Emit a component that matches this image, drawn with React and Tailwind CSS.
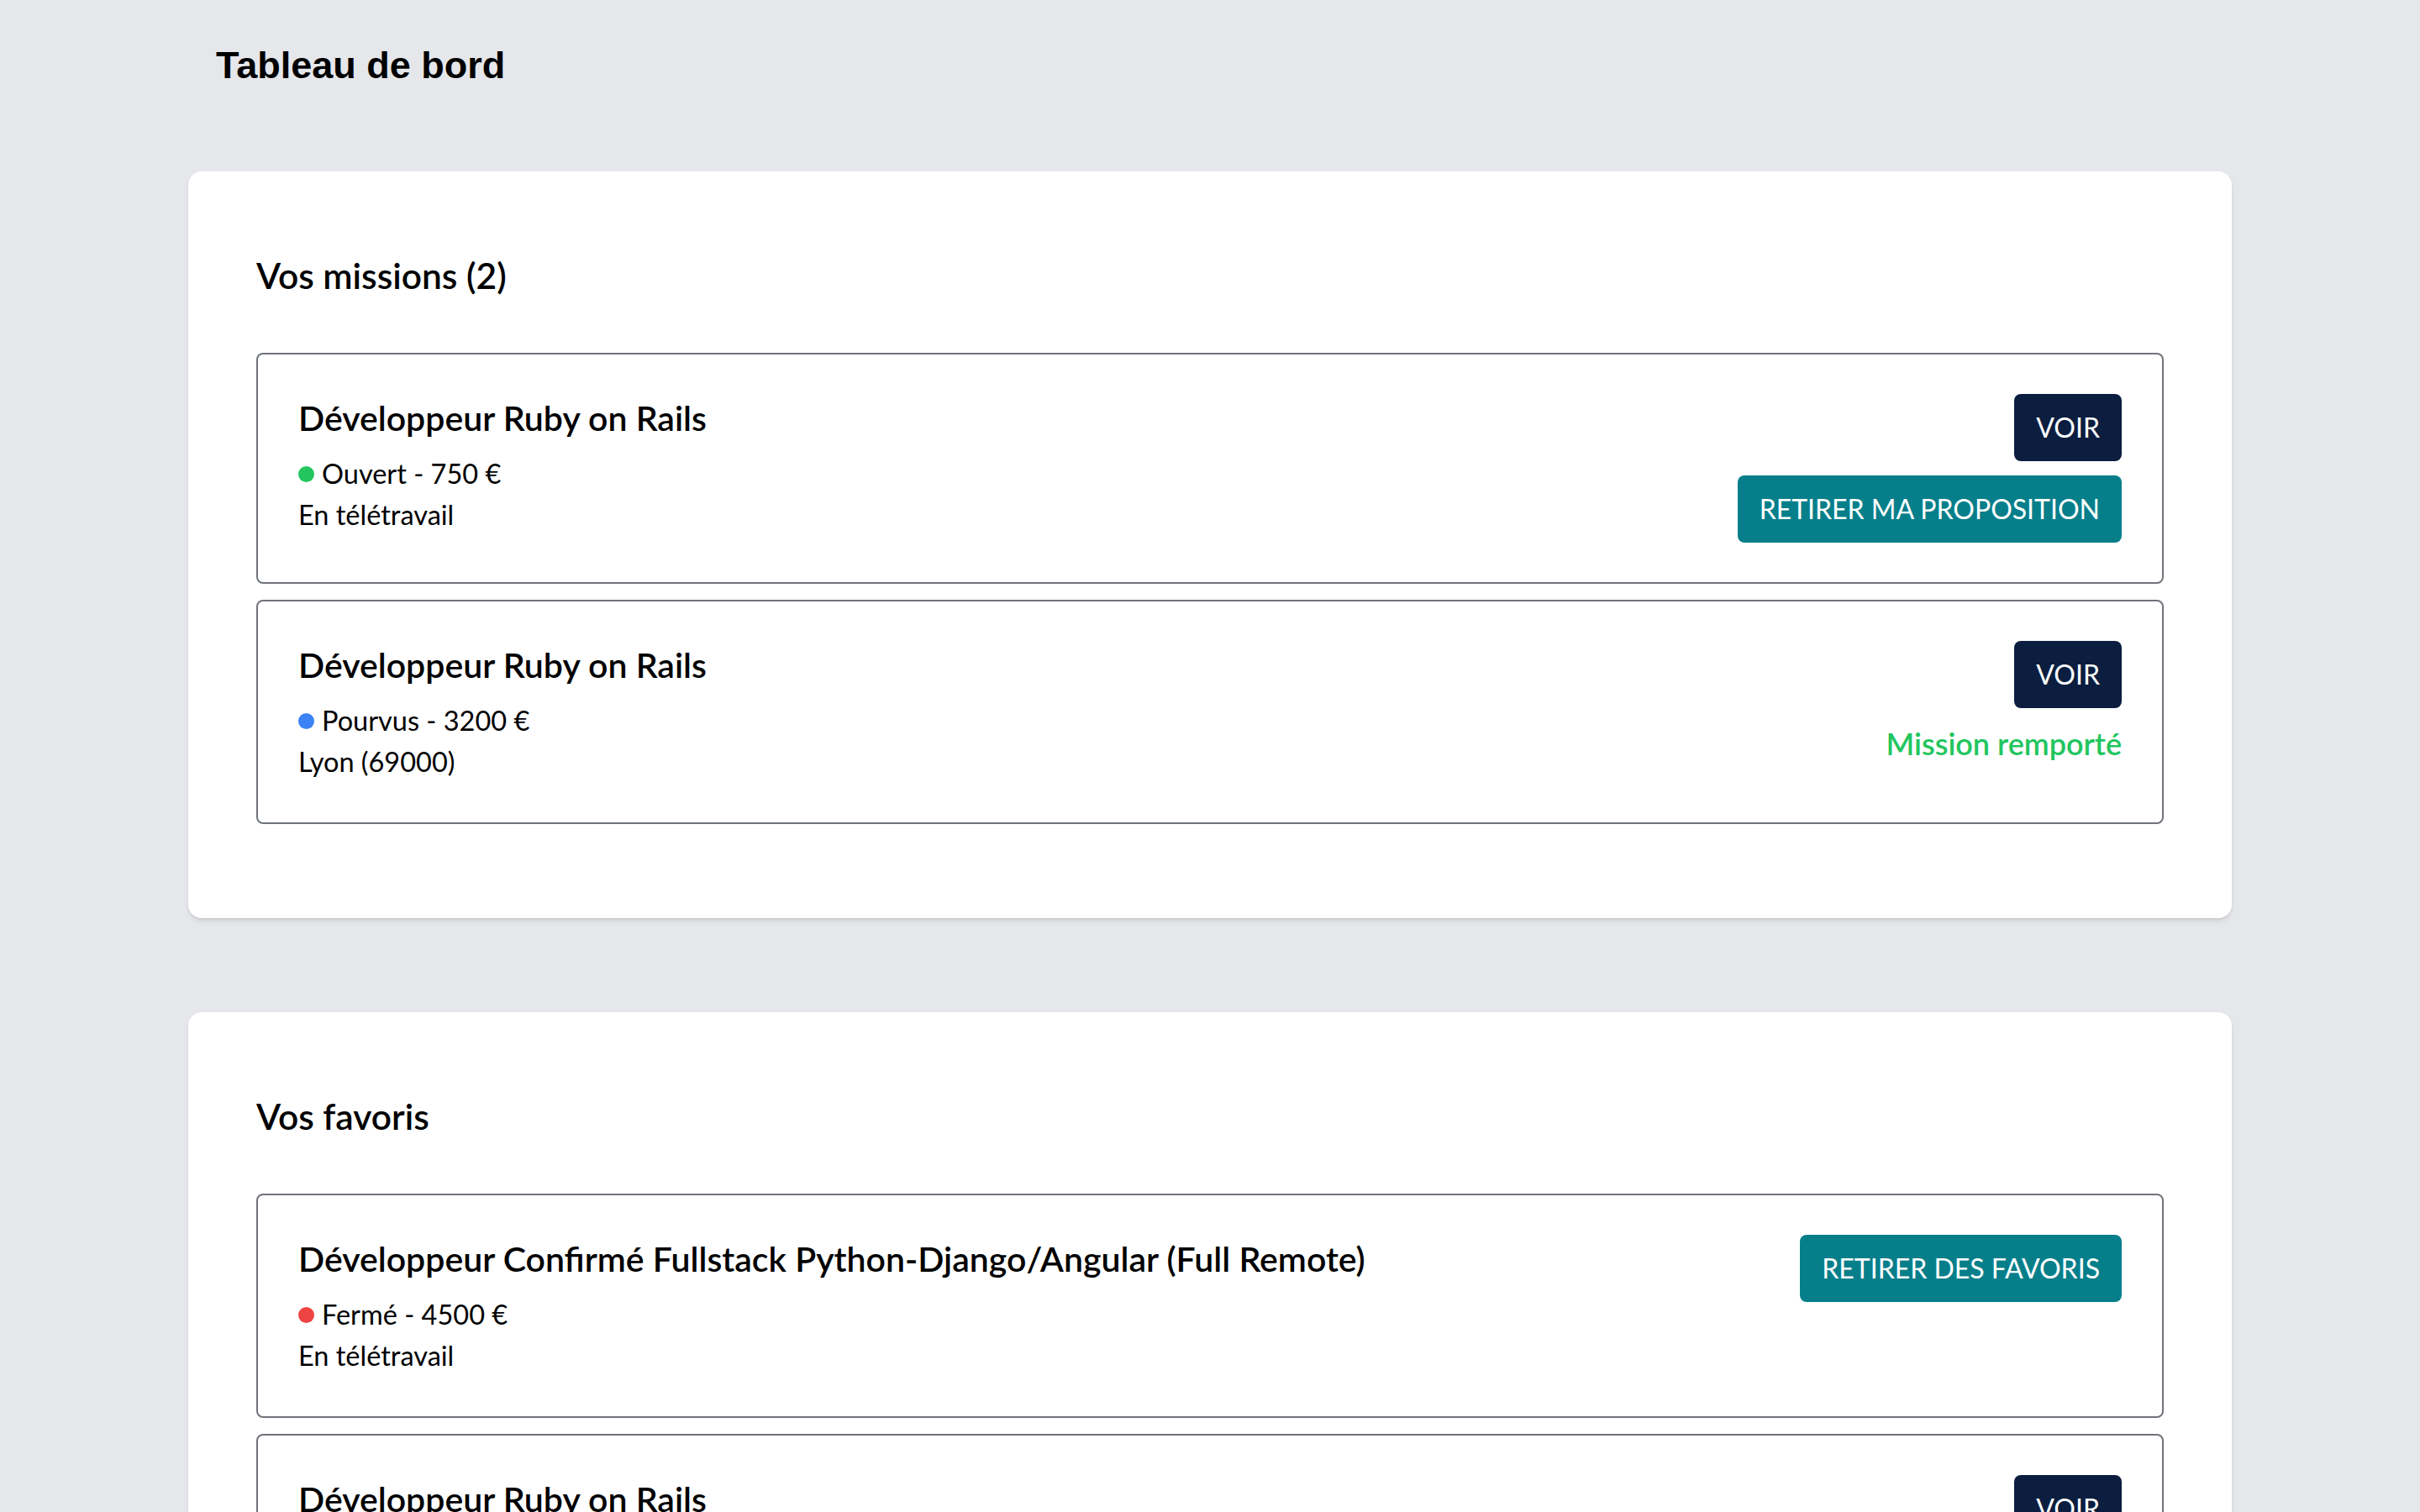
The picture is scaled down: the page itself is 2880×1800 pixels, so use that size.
import { useState } from 'react';

const missions = [
  { id: 1, title: 'Développeur Ruby on Rails', status: 'Ouvert', price: '750 €', place: 'En télétravail', dot: 'bg-[#22c55e]', action: 'retirer' },
  { id: 2, title: 'Développeur Ruby on Rails', status: 'Pourvus', price: '3200 €', place: 'Lyon (69000)', dot: 'bg-[#3b82f6]', action: 'won' },
];

const favoris = [
  { id: 3, title: 'Développeur Confirmé Fullstack Python-Django/Angular (Full Remote)', status: 'Fermé', price: '4500 €', place: 'En télétravail', dot: 'bg-[#ef4444]', voir: false },
  { id: 4, title: 'Développeur Ruby on Rails', status: 'Ouvert', price: '750 €', place: 'En télétravail', dot: 'bg-[#22c55e]', voir: true },
];

function VoirButton() {
  return (
    <button className="h-[80px] px-[26px] rounded-[8px] bg-[#0b1e3f] text-white text-[32px] leading-none">
      VOIR
    </button>
  );
}

function TealButton({ children }) {
  return (
    <button className="h-[80px] px-[26px] rounded-[8px] bg-[#077f8b] text-white text-[32px] leading-none">
      {children}
    </button>
  );
}

function MissionInfo({ m }) {
  return (
    <div className="flex flex-col">
      <h4 className="text-[41px] leading-[57px] font-semibold text-black">{m.title}</h4>
      <div className="mt-[14px] flex items-center gap-[9px] text-[32.5px] leading-[48px] text-black">
        <span className={`w-[19px] h-[19px] rounded-full ${m.dot}`}></span>
        {m.status} - {m.price}
      </div>
      <div className="text-[32.5px] leading-[50px] text-black">{m.place}</div>
    </div>
  );
}

function Item({ children }) {
  return (
    <div className="border-2 border-[#6f737a] rounded-[8px] px-[48px] py-[47px] flex justify-between items-start bg-white">
      {children}
    </div>
  );
}

export default function App() {
  const [items] = useState(missions);

  return (
    <div className="min-h-screen bg-[#e5e7eb] font-['Lato',sans-serif] text-black">
      <div className="w-[2432px] mx-auto pb-[120px]">
        <h1 className="pl-[33px] pt-[48px] text-[45px] leading-[60px] font-bold font-['Liberation_Sans',Arial,sans-serif]">
          Tableau de bord
        </h1>

        {/* Missions */}
        <section className="mt-[96px] bg-white rounded-[16px] shadow-md pt-[94px] pb-[112px] px-[81px]">
          <h2 className="text-[42.5px] leading-[60px] font-semibold mb-[62px]">Vos missions ({items.length})</h2>
          <div className="flex flex-col gap-[19px]">
            {items.map(m => (
              <Item key={m.id}>
                <MissionInfo m={m} />
                <div className="flex flex-col items-end gap-[17px]">
                  <VoirButton />
                  {m.action === 'retirer' ? (
                    <TealButton>RETIRER MA PROPOSITION</TealButton>
                  ) : (
                    <span className="text-[36px] leading-[51px] font-semibold text-[#22c55e]">Mission remporté</span>
                  )}
                </div>
              </Item>
            ))}
          </div>
        </section>

        {/* Favoris */}
        <section className="mt-[112px] bg-white rounded-[16px] shadow-md pt-[94px] pb-[110px] px-[81px]">
          <h2 className="text-[42.5px] leading-[60px] font-semibold mb-[62px]">Vos favoris</h2>
          <div className="flex flex-col gap-[19px]">
            {favoris.map(m => (
              <Item key={m.id}>
                <MissionInfo m={m} />
                <div className="flex flex-col items-end gap-[17px]">
                  {m.voir && <VoirButton />}
                  <TealButton>RETIRER DES FAVORIS</TealButton>
                </div>
              </Item>
            ))}
          </div>
        </section>
      </div>
    </div>
  );
}
